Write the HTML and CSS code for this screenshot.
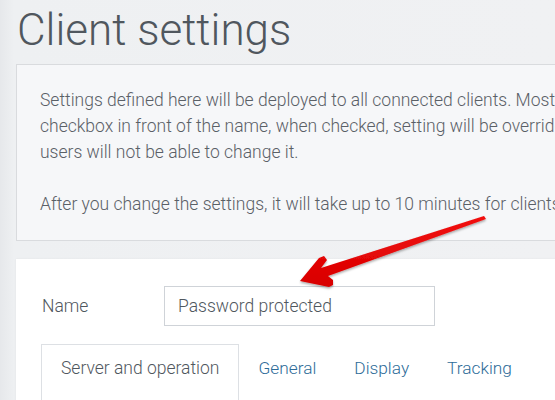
FILE: index.html
```html
<!DOCTYPE html>
<html>
<head>
<meta charset="utf-8">
<link rel="stylesheet" href="styles.css">
</head>
<body>
<div class="page">
  <h1 class="title">Client settings</h1>
  <div class="info">
    <p>Settings defined here will be deployed to all connected clients. Most settings have a<br>checkbox in front of the name, when checked, setting will be overridden and<br>users will not be able to change it.</p>
    <p>After you change the settings, it will take up to 10 minutes for clients to receive them.</p>
  </div>
  <div class="card">
    <div class="name-row">
      <label class="name-label">Name</label>
      <div class="name-input">Password protected</div>
    </div>
    <div class="tabs">
      <div class="tab active">Server and operation</div>
      <div class="tab">General</div>
      <div class="tab">Display</div>
      <div class="tab">Tracking</div>
    </div>
  </div>
  <svg class="arrow" width="555" height="400" viewBox="0 0 555 400">
    <defs>
      <linearGradient id="red" x1="0" y1="0" x2="0" y2="1">
        <stop offset="0" stop-color="#f21010"/>
        <stop offset="1" stop-color="#d80000"/>
      </linearGradient>
      <filter id="sh" x="-10%" y="-10%" width="120%" height="130%">
        <feDropShadow dx="0" dy="1.5" stdDeviation="1.2" flood-color="#000" flood-opacity="0.35"/>
      </filter>
    </defs>
    <polygon filter="url(#sh)" fill="url(#red)" points="300,281 319,258 324,256 327,260 321,268 484,216 486,219 328,276 333,280 333,285 329,287"/>
  </svg>
</div>
</body>
</html>
```

FILE: styles.css
```css
html, body {
  margin: 0;
  padding: 0;
}
body {
  width: 555px;
  height: 400px;
  overflow: hidden;
  background: linear-gradient(to right, #e6e8eb 0px, #eef0f2 14px, #f0f1f3 100%);
  font-family: Roboto, "Liberation Sans", sans-serif;
  font-weight: 300;
}
.page {
  position: relative;
  width: 555px;
  height: 400px;
  overflow: hidden;
}
.title {
  margin: 9px 0 12px 17px;
  font-size: 44px;
  line-height: 43px;
  font-weight: 300;
  color: #50575e;
  white-space: nowrap;
}
.info {
  margin-left: 16px;
  width: 800px;
  box-sizing: border-box;
  border: 1px solid #d9dbde;
  background: #f6f7f9;
  padding: 22px 0 23px 23px;
  color: #5a6067;
  font-size: 17.5px;
  line-height: 26px;
  white-space: nowrap;
}
.info p {
  margin: 0;
}
.info p + p {
  margin-top: 26px;
}
.card {
  margin: 18px 0 0 16px;
  width: 800px;
  height: 200px;
  background: #fff;
  padding: 27px 0 0 26px;
  box-sizing: border-box;
  box-shadow: 0 0 2px rgba(0,0,0,0.06);
}
.name-row {
  display: flex;
  align-items: center;
}
.name-label {
  width: 122px;
  font-size: 17.5px;
  color: #50575e;
}
.name-input {
  width: 271px;
  height: 40px;
  box-sizing: border-box;
  border: 1px solid #cfd3d8;
  padding: 0 13px;
  font-size: 17.5px;
  line-height: 38px;
  color: #50575e;
}
.tabs {
  display: flex;
  margin-top: 18px;
  margin-left: -1px;
}
.tab {
  padding: 10px 18px 40px;
  font-size: 17.3px;
  line-height: 26px;
  color: #2d6b98;
  border: 1px solid transparent;
  border-bottom: none;
  white-space: nowrap;
}
.tab.active {
  padding: 10px 19px 40px;
  font-size: 17.5px;
  color: #50575e;
  border-color: #dde0e4;
}
.arrow {
  position: absolute;
  left: 0;
  top: 0;
  pointer-events: none;
}
```
